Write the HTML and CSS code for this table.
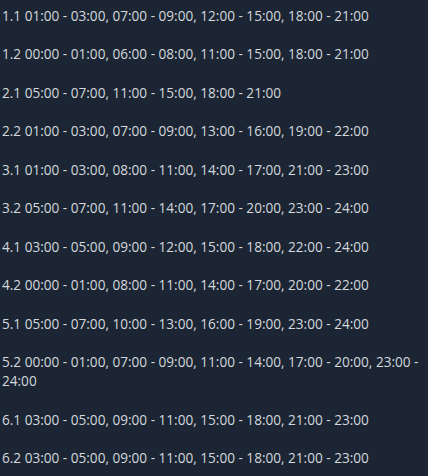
FILE: index.html
```html
<!DOCTYPE html>
<html>
<head>
<meta charset="utf-8">
<link rel="stylesheet" href="styles.css">
</head>
<body>
<div class="list">
<p class="row">1.1 01:00 - 03:00, 07:00 - 09:00, 12:00 - 15:00, 18:00 - 21:00</p>
<p class="row">1.2 00:00 - 01:00, 06:00 - 08:00, 11:00 - 15:00, 18:00 - 21:00</p>
<p class="row">2.1 05:00 - 07:00, 11:00 - 15:00, 18:00 - 21:00</p>
<p class="row">2.2 01:00 - 03:00, 07:00 - 09:00, 13:00 - 16:00, 19:00 - 22:00</p>
<p class="row">3.1 01:00 - 03:00, 08:00 - 11:00, 14:00 - 17:00, 21:00 - 23:00</p>
<p class="row">3.2 05:00 - 07:00, 11:00 - 14:00, 17:00 - 20:00, 23:00 - 24:00</p>
<p class="row">4.1 03:00 - 05:00, 09:00 - 12:00, 15:00 - 18:00, 22:00 - 24:00</p>
<p class="row">4.2 00:00 - 01:00, 08:00 - 11:00, 14:00 - 17:00, 20:00 - 22:00</p>
<p class="row">5.1 05:00 - 07:00, 10:00 - 13:00, 16:00 - 19:00, 23:00 - 24:00</p>
<p class="row">5.2 00:00 - 01:00, 07:00 - 09:00, 11:00 - 14:00, 17:00 - 20:00, 23:00 - 24:00</p>
<p class="row">6.1 03:00 - 05:00, 09:00 - 11:00, 15:00 - 18:00, 21:00 - 23:00</p>
<p class="row">6.2 03:00 - 05:00, 09:00 - 11:00, 15:00 - 18:00, 21:00 - 23:00</p>
</div>
</body>
</html>
```
FILE: styles.css
```css
html, body {
  margin: 0;
  padding: 0;
  background: #1b2533;
}
body {
  font-family: "Open Sans", sans-serif;
  font-size: 13.6px;
  line-height: 19px;
  color: #d4d8dd;
}
.list {
  padding: 5.5px 2px 0 2px;
  display: flex;
  flex-direction: column;
  gap: 19.5px;
}
.row {
  margin: 0;
}
```
